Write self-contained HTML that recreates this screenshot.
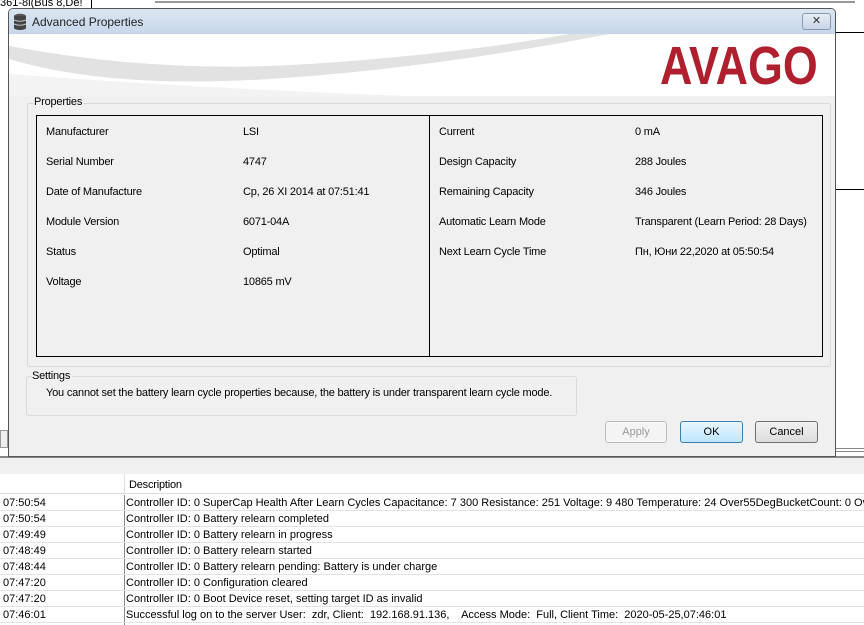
<!DOCTYPE html>
<html><head><meta charset="utf-8"><style>
*{margin:0;padding:0;box-sizing:border-box}
body{width:864px;height:625px;overflow:hidden;background:#fff;font-family:"Liberation Sans",sans-serif;font-size:11px;color:#000;position:relative}
.a{position:absolute;white-space:nowrap}
.lbl{position:absolute;white-space:nowrap;font-size:11px;letter-spacing:-0.2px;margin-top:1px}
.btn{position:absolute;height:22px;border:1px solid #707070;border-radius:3px;background:linear-gradient(#f2f2f2,#dcdcdc);text-align:center;line-height:20px;font-size:11px}
.row{position:absolute;left:0;width:864px;height:16px;border-bottom:1px solid #e4e4e4;font-size:11px;line-height:17px;letter-spacing:0px;white-space:nowrap;overflow:hidden}
.row span{position:absolute;left:3px}
.row b{font-weight:normal;position:absolute;left:126px;white-space:nowrap}
</style></head><body>
<div class="a" style="left:0;top:-3px;font-size:11px">361-8i(Bus 8,De!</div>
<div class="a" style="left:91px;top:0;width:180px;height:8px;border-left:1px solid #000"></div>
<div class="a" style="left:155px;top:0;width:700px;height:3px;background:#fff;border-bottom:2px solid #999"></div>
<div class="a" style="left:835px;top:32px;width:29px;height:1px;background:#000"></div>
<div class="a" style="left:835px;top:189px;width:29px;height:1px;background:#000"></div>
<div class="a" style="left:0;top:430px;width:8px;height:18px;border:1px solid #999;background:#eee"></div>
<div class="a" style="left:835px;top:448px;width:29px;height:4px;border-top:1px solid #888;border-bottom:1px solid #888"></div>
<div class="a" style="left:0;top:456px;width:864px;height:2px;background:#888"></div>
<div class="a" style="left:0;top:458px;width:864px;height:16px;background:#f0f0f0"></div>
<div class="a" style="left:0;top:474px;width:864px;height:20px;background:#fff;border-bottom:1px solid #ddd"></div>
<div class="a" style="left:124px;top:474px;width:1px;height:20px;background:#ddd"></div>
<div class="a" style="left:129px;top:479px;letter-spacing:-0.2px">Description</div>
<div class="a" style="left:124px;top:495px;width:1px;height:130px;background:#888"></div>
<div class="row" style="top:495px"><span>07:50:54</span><b>Controller ID: 0 SuperCap Health After Learn Cycles Capacitance: 7 300 Resistance: 251 Voltage: 9 480 Temperature: 24 Over55DegBucketCount: 0 Over</b></div>
<div class="row" style="top:511px"><span>07:50:54</span><b>Controller ID: 0 Battery relearn completed</b></div>
<div class="row" style="top:527px"><span>07:49:49</span><b>Controller ID: 0 Battery relearn in progress</b></div>
<div class="row" style="top:543px"><span>07:48:49</span><b>Controller ID: 0 Battery relearn started</b></div>
<div class="row" style="top:559px"><span>07:48:44</span><b>Controller ID: 0 Battery relearn pending: Battery is under charge</b></div>
<div class="row" style="top:575px"><span>07:47:20</span><b>Controller ID: 0 Configuration cleared</b></div>
<div class="row" style="top:591px"><span>07:47:20</span><b>Controller ID: 0 Boot Device reset, setting target ID as invalid</b></div>
<div class="row" style="top:607px"><span>07:46:01</span><b>Successful log on to the server User:&nbsp; zdr, Client:&nbsp; 192.168.91.136,&nbsp;&nbsp;&nbsp; Access Mode:&nbsp; Full, Client Time:&nbsp; 2020-05-25,07:46:01</b></div>

<div class="a" style="left:8px;top:8px;width:828px;height:449px;border:1px solid #555;border-radius:5px 5px 0 0;background:#f0f0f0;overflow:hidden">
  <div class="a" style="left:0;top:0;width:826px;height:25px;background:linear-gradient(#dbe6f3,#c7d7ea)"></div>
  <svg class="a" style="left:3px;top:4px" width="16" height="17" viewBox="0 0 16 17"><ellipse cx="8" cy="3" rx="6" ry="2.2" fill="#555"/><rect x="2" y="3" width="12" height="12" fill="#444"/><ellipse cx="8" cy="15" rx="6" ry="2" fill="#444"/><path d="M2 7q6 2.5 12 0M2 11q6 2.5 12 0" stroke="#bbb" fill="none"/></svg>
  <div class="a" style="left:23px;top:6px;font-size:12px;color:#222">Advanced Properties</div>
  <div class="a" style="left:793px;top:4px;width:29px;height:17px;border:1px solid #8898b0;border-radius:3px;background:linear-gradient(#e6edf6,#cad6e6);text-align:center;font-size:11px;line-height:15px;color:#333">✕</div>
  <div class="a" style="left:0;top:25px;width:826px;height:62px;background:#fff;overflow:hidden">
    <svg class="a" style="left:0;top:0" width="826" height="62"><path d="M0 12 Q150 40 300 30 T560 0 L600 0 Q420 35 260 45 T0 25Z" fill="#e2e2e2"/><path d="M0 40 Q200 55 400 62 L0 62Z" fill="#f3f3f3"/></svg>
    <div class="a" style="left:651px;top:5px;font-size:54px;font-weight:bold;color:#b01f2e;line-height:54px;transform:scaleX(0.83);transform-origin:0 0">AVAGO</div>
  </div>
  <div class="a" style="left:18px;top:94px;width:804px;height:264px;border:1px solid #d8d8d8;border-radius:3px"></div>
  <div class="a" style="left:24px;top:87px;background:#f0f0f0;padding:0 1px;letter-spacing:-0.2px">Properties</div>
  <div class="a" style="left:27px;top:106px;width:787px;height:242px;border:1px solid #000"></div>
  <div class="a" style="left:420px;top:106px;width:1px;height:242px;background:#000"></div>
</div>
<div class="lbl" style="left:46px;top:125px">Manufacturer</div><div class="lbl" style="left:243px;top:125px">LSI</div>
<div class="lbl" style="left:46px;top:155px">Serial Number</div><div class="lbl" style="left:243px;top:155px">4747</div>
<div class="lbl" style="left:46px;top:185px">Date of Manufacture</div><div class="lbl" style="left:243px;top:185px">Ср, 26 XI 2014 at 07:51:41</div>
<div class="lbl" style="left:46px;top:215px">Module Version</div><div class="lbl" style="left:243px;top:215px">6071-04A</div>
<div class="lbl" style="left:46px;top:245px">Status</div><div class="lbl" style="left:243px;top:245px">Optimal</div>
<div class="lbl" style="left:46px;top:275px">Voltage</div><div class="lbl" style="left:243px;top:275px">10865 mV</div>
<div class="lbl" style="left:439px;top:125px">Current</div><div class="lbl" style="left:635px;top:125px">0 mA</div>
<div class="lbl" style="left:439px;top:155px">Design Capacity</div><div class="lbl" style="left:635px;top:155px">288 Joules</div>
<div class="lbl" style="left:439px;top:185px">Remaining Capacity</div><div class="lbl" style="left:635px;top:185px">346 Joules</div>
<div class="lbl" style="left:439px;top:215px">Automatic Learn Mode</div><div class="lbl" style="left:635px;top:215px">Transparent (Learn Period: 28 Days)</div>
<div class="lbl" style="left:439px;top:245px">Next Learn Cycle Time</div><div class="lbl" style="left:635px;top:245px">Пн, Юни 22,2020 at 05:50:54</div>
<div class="a" style="left:26px;top:376px;width:551px;height:40px;border:1px solid #dadada;border-radius:3px"></div>
<div class="lbl" style="left:32px;top:369px;background:#f0f0f0;padding-right:2px">Settings</div>
<div class="lbl" style="left:46px;top:386px">You cannot set the battery learn cycle properties because, the battery is under transparent learn cycle mode.</div>
<div class="btn" style="left:605px;top:421px;width:62px;border-color:#bbb;color:#999;background:#f4f4f4">Apply</div>
<div class="btn" style="left:680px;top:421px;width:63px;border-color:#3c7fb1;background:linear-gradient(#eaf6fd,#bee6fd)">OK</div>
<div class="btn" style="left:755px;top:421px;width:63px">Cancel</div>
</body></html>
